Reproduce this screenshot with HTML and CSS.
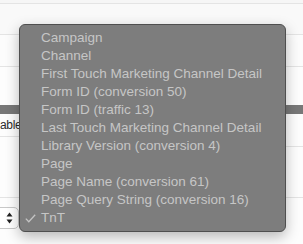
FILE: index.html
```html
<!DOCTYPE html>
<html lang="en">
<head>
  <meta charset="UTF-8">
  <title>Dimension picker</title>
  <link rel="stylesheet" href="styles.css">
</head>
<body>
  <div class="page">
    <div class="band band-top"></div>
    <div class="band band-a"></div>
    <div class="band band-b"></div>
    <div class="band band-gap"></div>
    <div class="bar"></div>
    <div class="lower">
      <div class="side side-left">
        <div class="band band-label"><span class="label-text">able</span></div>
        <div class="band band-c-left"></div>
        <div class="select-row">
          <div class="select-box">
            <svg class="stepper" width="7" height="12" viewBox="0 0 7 12">
              <path d="M3.5 0.5 L6.5 4.5 L0.5 4.5 Z" fill="#222"/>
              <path d="M3.5 11.5 L6.5 7.5 L0.5 7.5 Z" fill="#222"/>
            </svg>
          </div>
        </div>
      </div>
      <div class="side side-right">
        <div class="band band-c-right"></div>
        <div class="band band-d-right"></div>
      </div>
    </div>
  </div>

  <ul class="menu">
    <li class="menu-item">Campaign</li>
    <li class="menu-item">Channel</li>
    <li class="menu-item">First Touch Marketing Channel Detail</li>
    <li class="menu-item">Form ID (conversion 50)</li>
    <li class="menu-item">Form ID (traffic 13)</li>
    <li class="menu-item">Last Touch Marketing Channel Detail</li>
    <li class="menu-item">Library Version (conversion 4)</li>
    <li class="menu-item">Page</li>
    <li class="menu-item">Page Name (conversion 61)</li>
    <li class="menu-item">Page Query String (conversion 16)</li>
    <li class="menu-item selected">
      <svg class="check" width="11" height="9" viewBox="0 0 11 9">
        <path d="M0.8 4.6 L3.8 7.8 L10.2 0.8" fill="none" stroke="#c4c4c4" stroke-width="1.3"/>
      </svg>TnT
    </li>
  </ul>
</body>
</html>
```

FILE: styles.css
```css
* {
  margin: 0;
  padding: 0;
  box-sizing: border-box;
}

body {
  width: 303px;
  height: 244px;
  overflow: hidden;
  background: #fdfdfd;
  font-family: "Liberation Sans", Arial, sans-serif;
  position: relative;
}

.page {
  display: flex;
  flex-direction: column;
  height: 244px;
}

.band {
  border-bottom: 1px solid #e4e4e4;
}

.band-top {
  height: 4px;
  background: #f6f6f6;
}

.band-a {
  height: 31px;
  background: #f9f9f9;
}

.band-b {
  height: 32px;
  background: #fcfcfc;
}

.band-gap {
  height: 38px;
  border-bottom: none;
}

.bar {
  height: 9px;
  background: #787878;
}

.lower {
  display: flex;
  justify-content: space-between;
}

.side {
  display: flex;
  flex-direction: column;
}

.side-left {
  width: 20px;
}

.side-right {
  width: 18px;
}

.band-label {
  height: 23px;
  display: flex;
  align-items: center;
  overflow: hidden;
}

.label-text {
  font-size: 12px;
  letter-spacing: -0.3px;
  color: #2b2b2b;
  white-space: nowrap;
}

.band-c-left {
  height: 61px;
}

.band-c-right {
  height: 33px;
}

.band-d-right {
  height: 51px;
}

.select-row {
  padding-top: 9px;
  margin-left: -10px;
}

.select-box {
  height: 22px;
  width: 29px;
  border: 1px solid #c8c8c8;
  border-radius: 5px;
  background: #fff;
  display: flex;
  align-items: center;
  justify-content: flex-end;
  padding-right: 5px;
}

/* popup list */
.menu {
  position: absolute;
  left: 19px;
  top: 24px;
  width: 267px;
  height: 208px;
  list-style: none;
  padding: 4px 0 6px;
  background: #7d7d7d;
  border: 1px solid #4f4f4f;
  border-radius: 6px;
  box-shadow: 0 5px 14px rgba(0, 0, 0, 0.28);
}

.menu-item {
  position: relative;
  height: 18px;
  line-height: 18px;
  padding-left: 21px;
  font-size: 13.5px;
  color: #c6c6c6;
  white-space: nowrap;
}

.check {
  position: absolute;
  left: 5px;
  top: 5px;
}
```
